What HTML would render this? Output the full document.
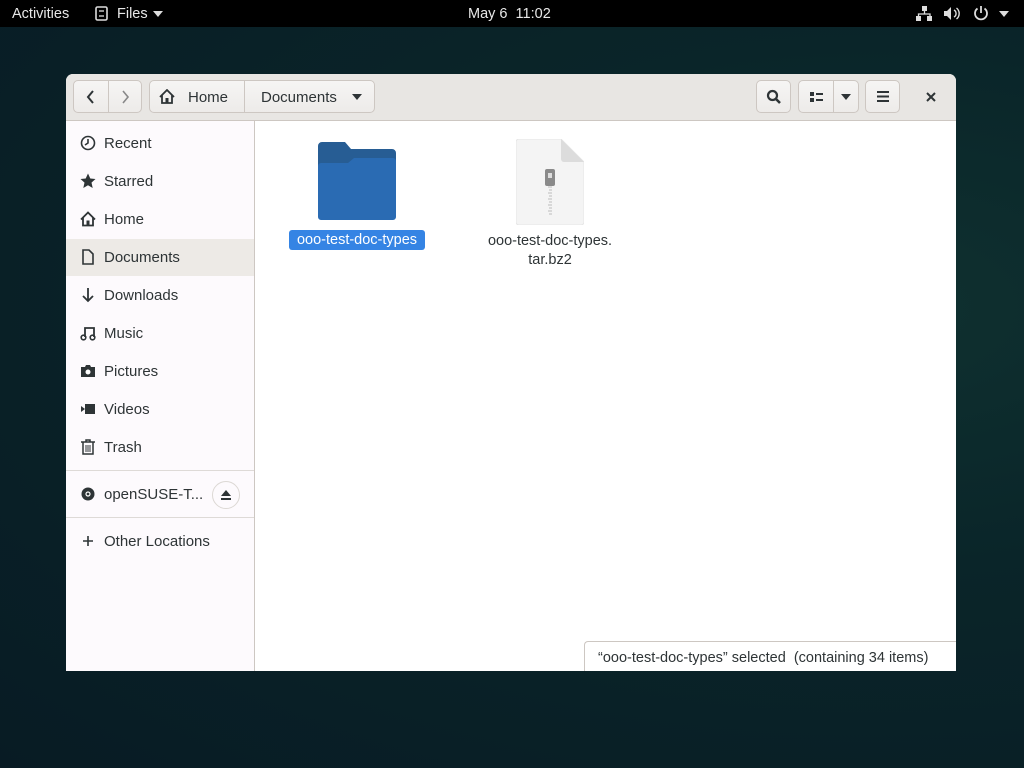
<!DOCTYPE html>
<html><head><meta charset="utf-8"><style>
*{margin:0;padding:0;box-sizing:border-box}
body{width:1024px;height:768px;overflow:hidden;font-family:"Liberation Sans",sans-serif;background:radial-gradient(ellipse at 85% 40%,#0f3130 0%,#0a2529 40%,#081b24 100%);position:relative}
.top{position:absolute;left:0;top:0;width:1024px;height:27px;background:#000;color:#e8e8e8;font-size:14.5px}
.top span{position:absolute;top:6px}
.win{position:absolute;left:66px;top:74px;width:890px;height:597px;background:#fff;border-radius:7px 7px 0 0;overflow:hidden}
.hb{position:absolute;left:0;top:0;width:890px;height:47px;background:#e8e6e3;border-bottom:1px solid #cdc7c2}
.btn{position:absolute;top:6px;height:33px;background:linear-gradient(#f6f5f4,#edebe9);border:1px solid #cdc7c2;border-radius:5px;color:#2e3436;font-size:15px}
.side{position:absolute;left:0;top:47px;width:189px;height:550px;background:#fdfafd;border-right:1px solid #cdc7c2}
.it{position:absolute;left:0;width:188px;height:38px;font-size:15px;color:#2e3436}
.it span{position:absolute;left:38px;top:12px}
.it svg{position:absolute;left:14px;top:12px}
.sep{position:absolute;left:0;width:188px;height:1px;background:#dedad7}
.lbl{position:absolute;font-size:14.5px;color:#2e3436;text-align:center}
</style></head><body>
<div class="top">
<span style="left:12px">Activities</span>
<svg style="position:absolute;left:95px;top:6px" width="13" height="15" viewBox="0 0 13 15"><rect x="1" y="1" width="11" height="13" rx="1.5" fill="none" stroke="#ddd" stroke-width="1.6"/><line x1="4" y1="5" x2="9" y2="5" stroke="#ddd" stroke-width="1.3"/><line x1="4" y1="10" x2="9" y2="10" stroke="#ddd" stroke-width="1.3"/></svg>
<span style="left:117px">Files</span>
<svg style="position:absolute;left:153px;top:11px" width="10" height="6"><path d="M0 0h10L5 6z" fill="#ddd"/></svg>
<span style="left:468px">May 6&nbsp; 11:02</span>
<svg style="position:absolute;left:916px;top:6px" width="16" height="15" viewBox="0 0 16 15"><rect x="6" y="0" width="5" height="5" fill="#ddd"/><rect x="0" y="10" width="5" height="5" fill="#ddd"/><rect x="11" y="10" width="5" height="5" fill="#ddd"/><path d="M8.5 5v3M2.5 10V8h11.5v2" stroke="#ddd" stroke-width="1.3" fill="none"/></svg>
<svg style="position:absolute;left:944px;top:6px" width="17" height="15" viewBox="0 0 17 15"><path d="M0 5h3l4-4v13l-4-4H0z" fill="#ddd"/><path d="M10 4a4 4 0 0 1 0 7M12.5 2a7 7 0 0 1 0 11" stroke="#ddd" stroke-width="1.4" fill="none"/></svg>
<svg style="position:absolute;left:973px;top:5px" width="16" height="16" viewBox="0 0 16 16"><path d="M4.5 3.5a6 6 0 1 0 7 0" stroke="#ddd" stroke-width="1.8" fill="none"/><line x1="8" y1="1" x2="8" y2="8" stroke="#ddd" stroke-width="1.8"/></svg>
<svg style="position:absolute;left:999px;top:11px" width="10" height="6"><path d="M0 0h10L5 6z" fill="#ddd"/></svg>
</div>
<div class="win">
<div class="hb">
<div class="btn" style="left:7px;width:69px"><div style="position:absolute;left:34px;top:0;width:1px;height:31px;background:#cdc7c2"></div>
<svg style="position:absolute;left:12px;top:9px" width="10" height="14"><path d="M7 1L2 7l5 6" stroke="#2e3436" stroke-width="2" fill="none"/></svg>
<svg style="position:absolute;left:46px;top:9px" width="10" height="14"><path d="M3 1l5 6-5 6" stroke="#888" stroke-width="1.6" fill="none"/></svg></div>
<div class="btn" style="left:83px;width:226px"><div style="position:absolute;left:94px;top:0;width:1px;height:31px;background:#cdc7c2"></div>
<svg style="position:absolute;left:9px;top:8px" width="16" height="15" viewBox="0 0 16 15"><path d="M1 8L8 1l7 7M3 6v8h10V6" stroke="#2e3436" stroke-width="1.8" fill="none"/><rect x="6.5" y="9" width="3" height="5" fill="#2e3436"/></svg>
<span style="position:absolute;left:38px;top:8px">Home</span>
<span style="position:absolute;left:111px;top:8px">Documents</span>
<svg style="position:absolute;left:202px;top:13px" width="10" height="6"><path d="M0 0h10L5 6z" fill="#2e3436"/></svg></div>
<div class="btn" style="left:690px;width:35px"><svg style="position:absolute;left:9px;top:8px" width="16" height="16" viewBox="0 0 16 16"><circle cx="6.5" cy="6.5" r="4.5" stroke="#2e3436" stroke-width="2.2" fill="none"/><line x1="10" y1="10" x2="14" y2="14" stroke="#2e3436" stroke-width="2.6"/></svg></div>
<div class="btn" style="left:732px;width:61px"><div style="position:absolute;left:34px;top:0;width:1px;height:31px;background:#cdc7c2"></div>
<svg style="position:absolute;left:11px;top:10px" width="14" height="12"><rect x="0" y="1" width="4" height="4" fill="#2e3436"/><rect x="0" y="7" width="4" height="4" fill="#2e3436"/><rect x="6" y="2" width="7" height="2" fill="#2e3436"/><rect x="6" y="8" width="7" height="2" fill="#2e3436"/></svg>
<svg style="position:absolute;left:42px;top:13px" width="10" height="6"><path d="M0 0h10L5 6z" fill="#2e3436"/></svg></div>
<div class="btn" style="left:799px;width:35px"><svg style="position:absolute;left:11px;top:10px" width="12" height="11"><rect y="0" width="12" height="2" fill="#2e3436"/><rect y="4.5" width="12" height="2" fill="#2e3436"/><rect y="9" width="12" height="2" fill="#2e3436"/></svg></div>
<svg style="position:absolute;left:860px;top:18px" width="10" height="10"><path d="M1 1l8 8M9 1L1 9" stroke="#2e3436" stroke-width="2"/></svg>
</div>
<div class="side">
<div style="position:absolute;left:0;top:118px;width:188px;height:37px;background:#edeae6"></div>
<div class="it" style="top:2px"><svg width="16" height="16" viewBox="0 0 16 16"><circle cx="8" cy="8" r="6.5" stroke="#2e3436" stroke-width="1.6" fill="none"/><path d="M8 4v4l-3 2" stroke="#2e3436" stroke-width="1.6" fill="none"/></svg><span>Recent</span></div>
<div class="it" style="top:40px"><svg width="16" height="16" viewBox="0 0 16 16"><path d="M8 0.5l2.3 5 5.2.5-4 3.6 1.2 5.4L8 12.2 3.3 15l1.2-5.4-4-3.6 5.2-.5z" fill="#2e3436"/></svg><span>Starred</span></div>
<div class="it" style="top:78px"><svg width="16" height="16" viewBox="0 0 16 15"><path d="M1 8L8 1l7 7M3 6v8h10V6" stroke="#2e3436" stroke-width="1.8" fill="none"/><rect x="6.5" y="9" width="3" height="5" fill="#2e3436"/></svg><span>Home</span></div>
<div class="it" style="top:116px"><svg width="16" height="16" viewBox="0 0 16 16"><path d="M3 1h6l4 4v10H3z" stroke="#2e3436" stroke-width="1.6" fill="none"/></svg><span>Documents</span></div>
<div class="it" style="top:154px"><svg width="16" height="16" viewBox="0 0 16 16"><path d="M8 1v13M3 9l5 5 5-5" stroke="#2e3436" stroke-width="1.8" fill="none"/></svg><span>Downloads</span></div>
<div class="it" style="top:192px"><svg width="16" height="16" viewBox="0 0 16 16"><path d="M5 12V3h9v9" stroke="#2e3436" stroke-width="1.8" fill="none"/><circle cx="3.5" cy="12.5" r="2.3" stroke="#2e3436" stroke-width="1.6" fill="none"/><circle cx="12.5" cy="12.5" r="2.3" stroke="#2e3436" stroke-width="1.6" fill="none"/></svg><span>Music</span></div>
<div class="it" style="top:230px"><svg width="16" height="16" viewBox="0 0 16 16"><path d="M1 4h4l1-2h4l1 2h4v10H1z" fill="#2e3436"/><circle cx="8" cy="9" r="2.5" fill="#fff"/></svg><span>Pictures</span></div>
<div class="it" style="top:268px"><svg width="16" height="16" viewBox="0 0 16 16"><path d="M1 5l4 3-4 3z" fill="#2e3436"/><rect x="5" y="3" width="10" height="10" fill="#2e3436"/></svg><span>Videos</span></div>
<div class="it" style="top:306px"><svg width="16" height="16" viewBox="0 0 16 16"><path d="M1 3h14M6 3V1h4v2M3 3v12h10V3" stroke="#2e3436" stroke-width="1.5" fill="none"/><path d="M6 6v7M8 6v7M10 6v7" stroke="#2e3436" stroke-width="1"/></svg><span>Trash</span></div>
<div class="sep" style="top:349px"></div>
<div class="it" style="top:353px"><svg width="16" height="16" viewBox="0 0 16 16"><circle cx="8" cy="8" r="6.5" fill="#2e3436"/><circle cx="8" cy="8" r="2" fill="none" stroke="#fff" stroke-width="1.2"/></svg><span>openSUSE-T...</span>
<div style="position:absolute;left:146px;top:7px;width:28px;height:28px;border:1px solid #dcd8d4;border-radius:50%"><svg style="position:absolute;left:7px;top:7px" width="12" height="12"><path d="M1 7L6 1l5 6z" fill="#2e3436"/><rect x="1" y="9" width="10" height="2" fill="#2e3436"/></svg></div></div>
<div class="sep" style="top:396px"></div>
<div class="it" style="top:400px"><svg width="16" height="16" viewBox="0 0 16 16"><path d="M8 3v10M3 8h10" stroke="#2e3436" stroke-width="1.6"/></svg><span>Other Locations</span></div>
</div>
<svg style="position:absolute;left:252px;top:68px" width="78" height="78" viewBox="0 0 78 78"><path d="M0 4a4 4 0 0 1 4-4h23l6 7h41a4 4 0 0 1 4 4v20H0z" fill="#275d94"/><path d="M0 24a3 3 0 0 1 3-3h27l6-5h39a3 3 0 0 1 3 3v56a3 3 0 0 1-3 3H3a3 3 0 0 1-3-3z" fill="#2a6bb3"/></svg>
<div style="position:absolute;left:223px;top:156px;width:136px;height:20px;background:#3584e4;border-radius:3px"></div>
<div class="lbl" style="left:223px;top:158px;width:136px;color:#fff">ooo-test-doc-types</div>
<svg style="position:absolute;left:450px;top:65px" width="68" height="86" viewBox="0 0 68 86"><path d="M3 0h42l23 23v60a3 3 0 0 1-3 3H3a3 3 0 0 1-3-3V3a3 3 0 0 1 3-3z" fill="#f4f4f4" stroke="#e6e6e6"/><path d="M45 0v20a3 3 0 0 0 3 3h20z" fill="#dcdcdc"/><rect x="29" y="30" width="10" height="17" rx="2" fill="#8a8a8a"/><rect x="32" y="34" width="4" height="5" fill="#ddd"/><path d="M32 48h4M33 51h3M32 54h4M33 57h3M32 60h4M33 63h3M32 66h4M33 69h3M32 72h4M33 75h3" stroke="#c8c8c8" stroke-width="1.3"/></svg>
<div class="lbl" style="left:404px;top:158px;width:160px;line-height:19px">ooo-test-doc-types.<br>tar.bz2</div>
<div style="position:absolute;left:518px;top:567px;width:373px;height:31px;background:#fff;border:1px solid #cdc7c2;border-right:none;border-bottom:none;border-radius:4px 0 0 0;font-size:14.5px;color:#2e3436;padding:8px 0 0 13px">“ooo-test-doc-types” selected&nbsp; (containing 34 items)</div>
</div>
</body></html>
